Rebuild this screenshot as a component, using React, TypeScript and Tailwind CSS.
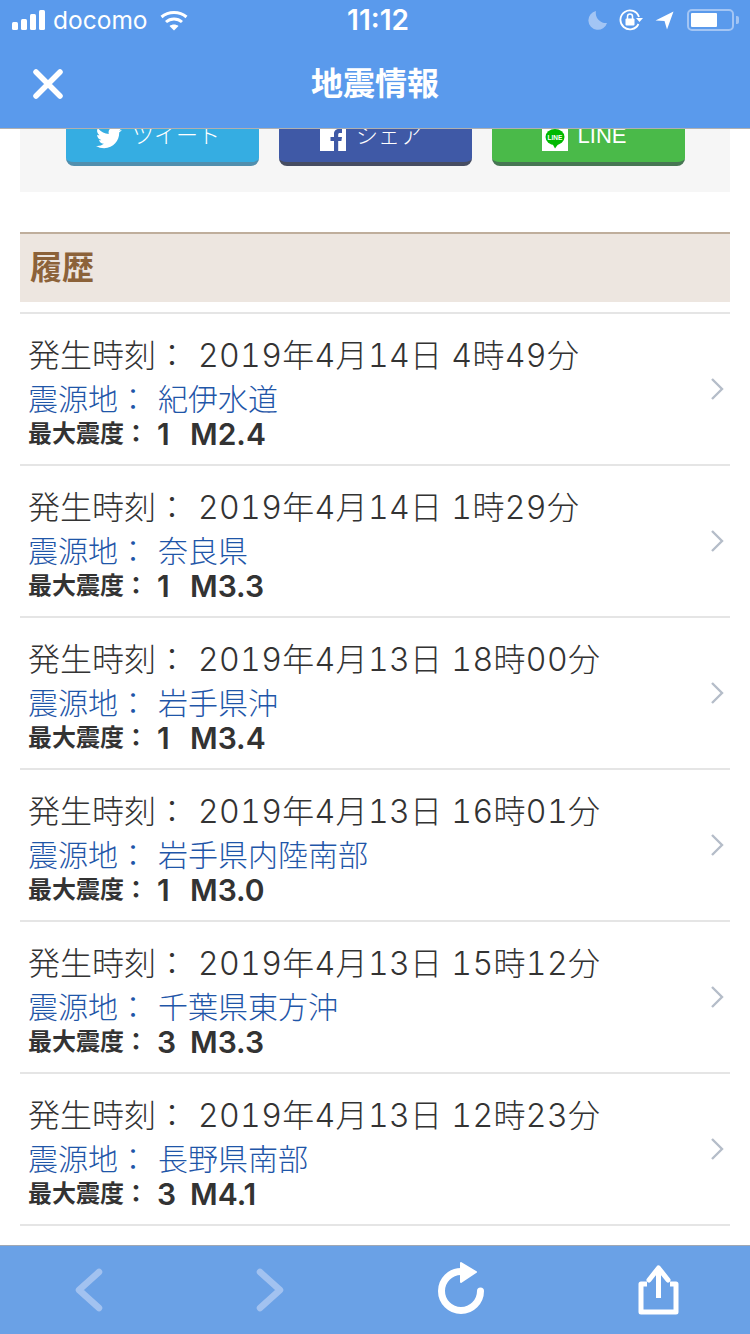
const JP = "font-['Liberation_Sans','Noto_Sans_CJK_JP',sans-serif]";
const NUM = "font-['Inter','Noto_Sans_CJK_JP',sans-serif]";

const rows = [
  { time: "2019年4月14日 4時49分", place: "紀伊水道", level: "1", mag: "M2.4" },
  { time: "2019年4月14日 1時29分", place: "奈良県", level: "1", mag: "M3.3" },
  { time: "2019年4月13日 18時00分", place: "岩手県沖", level: "1", mag: "M3.4" },
  { time: "2019年4月13日 16時01分", place: "岩手県内陸南部", level: "1", mag: "M3.0" },
  { time: "2019年4月13日 15時12分", place: "千葉県東方沖", level: "3", mag: "M3.3" },
  { time: "2019年4月13日 12時23分", place: "長野県南部", level: "3", mag: "M4.1" },
];

function StatusBar() {
  return (
    <div className="flex h-[40px] items-center pl-[12px] text-white font-['Inter',sans-serif]">
      <div className="flex h-[20px] shrink-0 items-end gap-[3px]">
        <span className="h-[8px] w-[6px] rounded-[1.5px] bg-white" />
        <span className="h-[11px] w-[6px] rounded-[1.5px] bg-white" />
        <span className="h-[16px] w-[6px] rounded-[1.5px] bg-white" />
        <span className="h-[20px] w-[6px] rounded-[1.5px] bg-white" />
      </div>
      <span className="ml-[8px] w-[94px] shrink-0 text-[24.5px] leading-none">docomo</span>
      <svg className="ml-[13px] shrink-0" width="28" height="21" viewBox="0 0 28 21" fill="none" stroke="white" strokeWidth="3">
        <path d="M1.5 7 C8.5 1 19.5 1 26.5 7" />
        <path d="M6 12 C10.5 8 17.5 8 22 12" />
        <path d="M14 20.5 L9.5 16 C12 14 16 14 18.5 16 Z" fill="white" stroke="none" />
      </svg>
      <span className="ml-[158px] w-[64px] shrink-0 text-center text-[28px] font-semibold leading-none">11:12</span>
      <svg className="ml-[178px] shrink-0" width="20" height="20" viewBox="0 0 20 20">
        <path d="M8 1 A9.5 9.5 0 1 0 19 13 A10 10 0 0 1 8 1 Z" fill="#a3c5f4" />
      </svg>
      <svg className="ml-[11px] shrink-0" width="24" height="22" viewBox="0 0 24 22" fill="none">
        <path d="M19.5 15 A9.5 9.5 0 1 1 20 8" stroke="white" strokeWidth="1.8" />
        <path d="M17 9 L24 9 L20.5 13 Z" fill="white" />
        <rect x="6.5" y="9.5" width="9" height="7" rx="1" fill="white" />
        <path d="M8.5 10 V7.5 A2.5 2.5 0 0 1 13.5 7.5 V10" stroke="white" strokeWidth="1.5" />
      </svg>
      <svg className="ml-[12px] shrink-0" width="19" height="19" viewBox="0 0 19 19">
        <path d="M0.5 9.5 L18.5 0.5 L12 18.5 L9.5 10 Z" fill="white" />
      </svg>
      <div className="ml-[13px] flex shrink-0 items-center">
        <div className="h-[22px] w-[47px] rounded-[5px] border-2 border-[#a3c5f4] p-[2px]">
          <div className="h-full w-[26px] rounded-[1px] bg-white" />
        </div>
        <span className="ml-[2px] h-[8px] w-[3px] rounded-r-[2px] bg-[#a3c5f4]" />
      </div>
    </div>
  );
}

function Chevron({ flip }: { flip?: boolean }) {
  return (
    <svg width="30" height="44" viewBox="0 0 30 44" fill="none" className={flip ? "rotate-180" : ""}>
      <path d="M25 4 L5 22 L25 40" stroke="#a2c2f0" strokeWidth="6.5" strokeLinejoin="round" strokeLinecap="round" />
    </svg>
  );
}

function ShareButton({ bg, edge, icon, label }: { bg: string; edge: string; icon: React.ReactNode; label: string }) {
  return (
    <div className={`flex h-[66px] flex-1 items-end justify-center gap-[10px] rounded-b-[8px] border-b-4 pb-[12px] pr-[9px] text-[22px] leading-[28px] font-light text-white ${bg} ${edge}`}>
      {icon}
      <span>{label}</span>
    </div>
  );
}

function Row({ time, place, level, mag }: (typeof rows)[number]) {
  return (
    <li className="flex h-[152px] items-center border-b-2 border-[#e5e5e5] pl-[8px] pr-[6px]">
      <div className="flex-1 pt-[4px]">
        <p className="flex h-[46px] items-center text-[32px] font-light text-[#333] whitespace-pre">
          <span className="w-[170px]">発生時刻：</span>
          <span className={`${NUM} tabular-nums tracking-[0.35px]`}>{time}</span>
        </p>
        <p className="flex h-[40px] items-center text-[30px] font-light text-[#1f56a8] whitespace-pre">
          <span className="w-[130px]">震源地：</span>
          <span>{place}</span>
        </p>
        <p className="flex h-[30px] items-center font-bold text-[#333] whitespace-pre">
          <span className="w-[129px] text-[24px]">最大震度：</span>
          <span className={`${NUM} w-[33px] text-[30px] font-semibold`}>{level}</span>
          <span className={`${NUM} text-[30px] font-semibold`}>{mag}</span>
        </p>
      </div>
      <svg width="14" height="24" viewBox="0 0 14 24" fill="none" stroke="#b5bdc9" strokeWidth="2.4">
        <path d="M2 2 L12 12 L2 22" />
      </svg>
    </li>
  );
}

export default function App() {
  return (
    <div className={`flex h-[1334px] w-[750px] flex-col overflow-hidden bg-white ${JP}`}>
      <header className="h-[129px] shrink-0 border-b border-[#b0b0b0] bg-[#5a9aec]">
        <StatusBar />
        <div className="relative flex h-[88px] items-center justify-center">
          <svg className="absolute left-[33px] top-[29px]" width="30" height="30" viewBox="0 0 30 30" stroke="white" strokeWidth="5.5" strokeLinecap="round">
            <path d="M3 3 L27 27 M27 3 L3 27" />
          </svg>
          <h1 className="text-[32px] font-bold text-white">地震情報</h1>
        </div>
      </header>

      <main className="flex-1 overflow-hidden px-[20px]">
        <section className="h-[63px] overflow-hidden bg-[#f6f6f6]">
          <div className="-mt-[29px] flex gap-[20px] pl-[46px] pr-[45px]">
            <ShareButton
              bg="bg-[#35ade2]"
              edge="border-[#518fae]"
              label="ツイート"
              icon={
                <svg width="26" height="22" viewBox="0 0 24 20" fill="white" className="mb-[1px]">
                  <path d="M24 2.4a9.8 9.8 0 0 1-2.8.8A4.9 4.9 0 0 0 23.3.5a9.8 9.8 0 0 1-3.1 1.2A4.9 4.9 0 0 0 11.8 6.2 13.9 13.9 0 0 1 1.7.9a4.9 4.9 0 0 0 1.5 6.6 4.9 4.9 0 0 1-2.2-.6c0 2.4 1.7 4.4 3.9 4.9a4.9 4.9 0 0 1-2.2.1 4.9 4.9 0 0 0 4.6 3.4A9.9 9.9 0 0 1 0 17.3 14 14 0 0 0 7.5 19.5c9.1 0 14.2-7.7 13.9-14.6A9.9 9.9 0 0 0 24 2.4Z" />
                </svg>
              }
            />
            <ShareButton
              bg="bg-[#3f59a6]"
              edge="border-[#474d62]"
              label="シェア"
              icon={
                <svg width="26" height="24" viewBox="0 0 26 24" className="-mb-[1px]">
                  <rect width="26" height="24" fill="white" />
                  <path d="M14 24 V14 H10.5 V10 H14 V7 C14 3.5 16 2 19 2 H22 V6 H20 C18.6 6 18.2 6.6 18.2 8 V10 H22 L21.4 14 H18.2 V24 Z" fill="#3f59a6" />
                </svg>
              }
            />
            <ShareButton
              bg="bg-[#4aba49]"
              edge="border-[#477653]"
              label="LINE"
              icon={
                <svg width="26" height="24" viewBox="0 0 26 24" className="-mb-[1px]">
                  <rect width="26" height="24" fill="white" />
                  <ellipse cx="13" cy="10" rx="9.5" ry="8" fill="#00b900" />
                  <path d="M10 16 L13 21.5 L17 16 Z" fill="#00b900" />
                  <text x="13" y="12.5" textAnchor="middle" fontSize="6.5" fontWeight="700" fill="white" fontFamily="Liberation Sans">LINE</text>
                </svg>
              }
            />
          </div>
        </section>

        <h2 className="mt-[40px] flex h-[70px] items-center border-t-2 border-[#bfae9c] bg-[#ede6e0] pl-[10px] text-[32px] font-bold text-[#8c6239]">
          履歴
        </h2>

        <ul className="mt-[10px] border-t-2 border-[#e5e5e5]">
          {rows.map((r) => (
            <Row key={r.time} {...r} />
          ))}
        </ul>
      </main>

      <footer className="flex h-[89px] shrink-0 items-center border-t border-[#a0a8b4] bg-[#6aa1e6]">
        <div className="ml-[74px]">
          <Chevron />
        </div>
        <div className="ml-[151px]">
          <Chevron flip />
        </div>
        <svg className="-mt-[2px] ml-[153px]" width="50" height="54" viewBox="0 0 50 54" fill="none">
          <path d="M42.5 29 A19.5 19.5 0 1 1 23 9.5" stroke="white" strokeWidth="7" strokeLinecap="round" />
          <path d="M23 1 L38 10 L23 20 Z" fill="white" stroke="white" strokeWidth="2" strokeLinejoin="round" />
        </svg>
        <svg className="-mt-[1px] ml-[150px]" width="42" height="50" viewBox="0 0 42 50" fill="none" stroke="white" strokeWidth="5" strokeLinejoin="round">
          <path d="M9 19 H3 V47 H38 V19 H32" />
          <path d="M20.5 33 V5" />
          <path d="M11 15 L20.5 3 L30 15" strokeLinecap="round" />
        </svg>
      </footer>
    </div>
  );
}
